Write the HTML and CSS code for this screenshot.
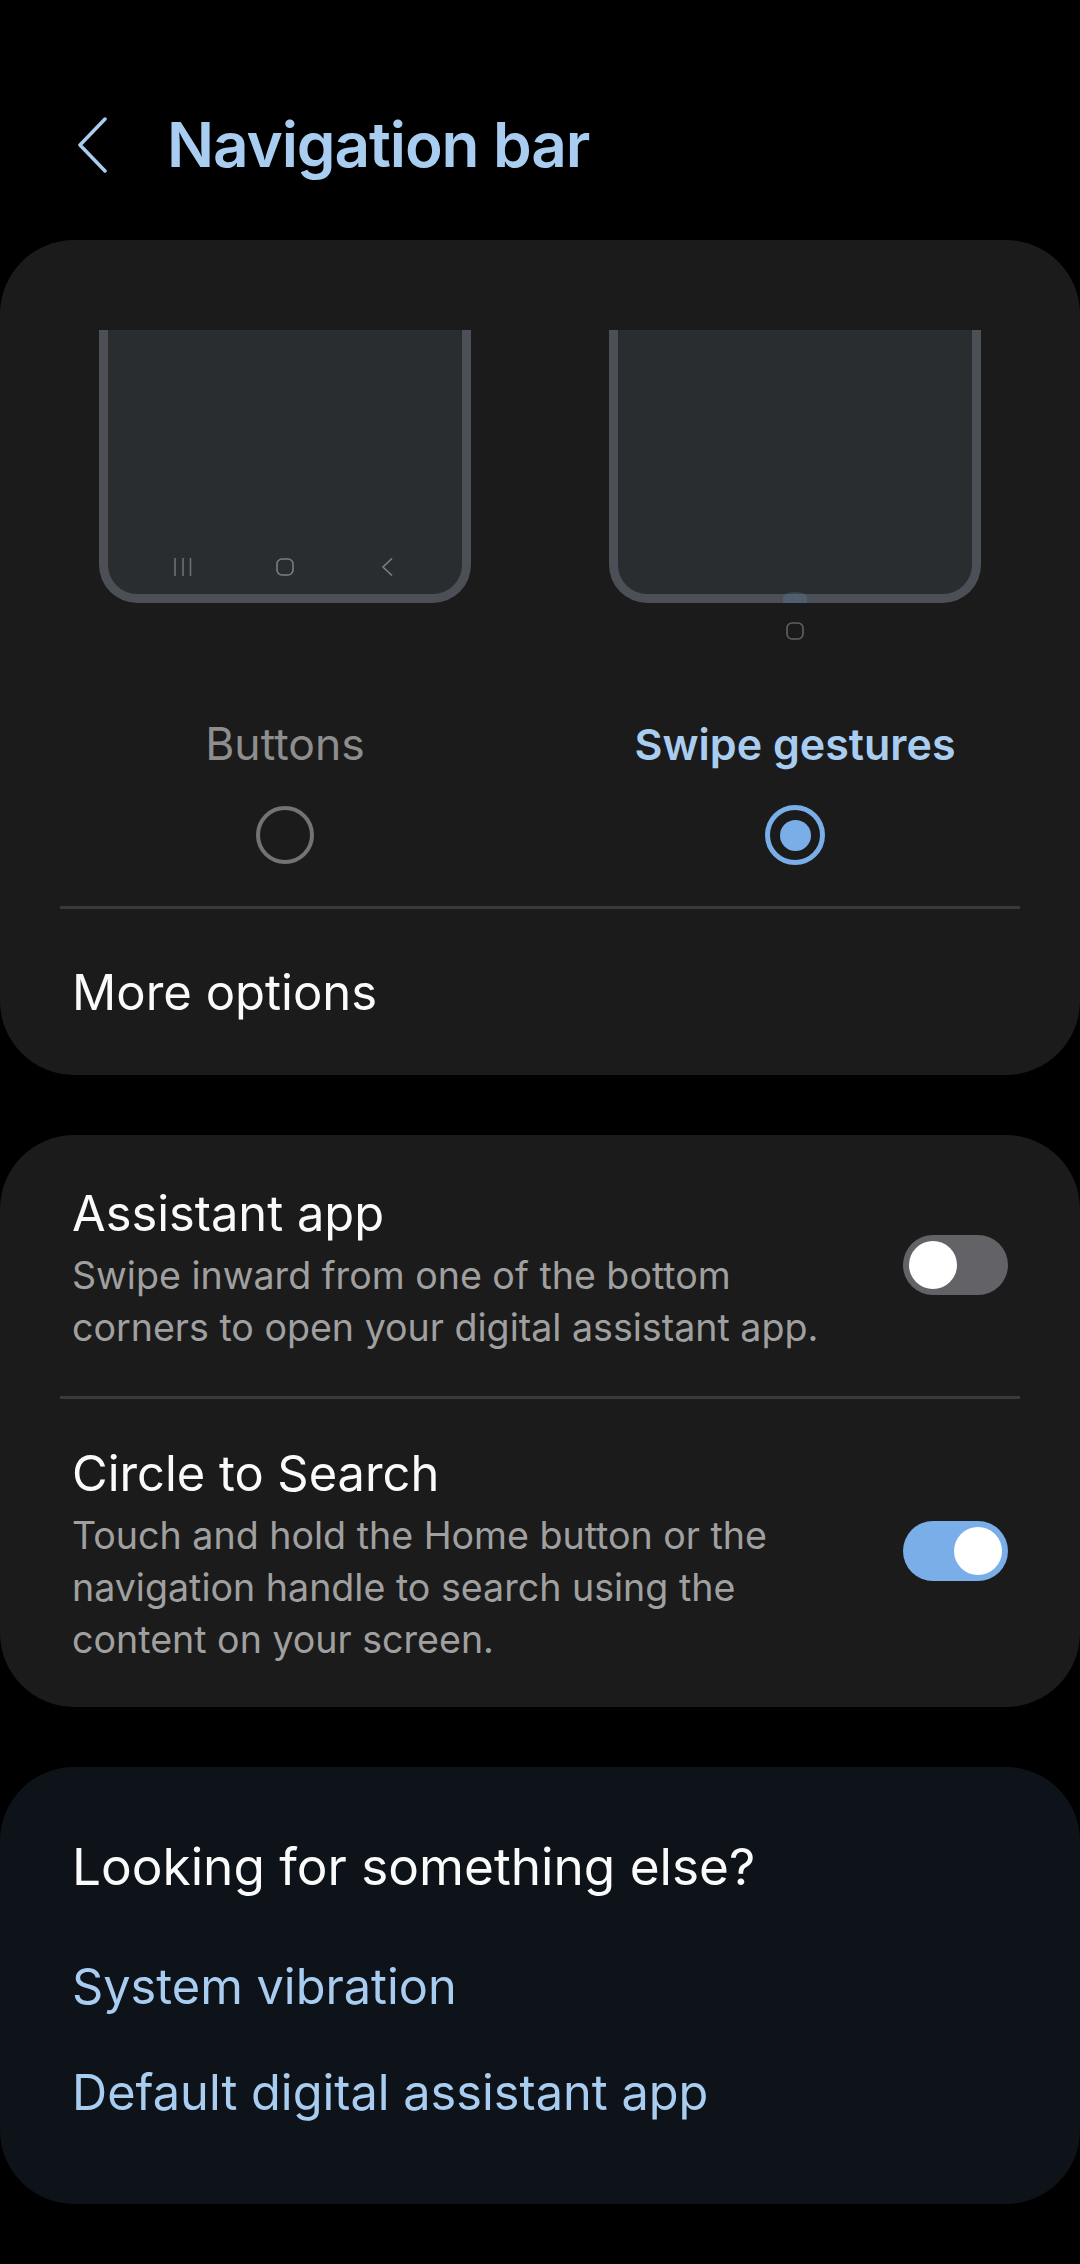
FILE: index.html
```html
<!DOCTYPE html>
<html lang="en">
<head>
  <meta charset="UTF-8">
  <meta name="viewport" content="width=device-width, initial-scale=1.0">
  <title>Navigation bar</title>
  <link rel="stylesheet" href="styles.css">
</head>
<body>
  <header class="top-bar">
    <svg class="back-icon" width="30" height="56" viewBox="0 0 30 56" fill="none" stroke="#a9cdf0" stroke-width="3.5" stroke-linecap="round" stroke-linejoin="round">
      <path d="M28 2 L3 28 L28 54"/>
    </svg>
    <h1 class="page-title">Navigation bar</h1>
  </header>

  <section class="card">
    <div class="nav-options">
      <div class="nav-option">
        <div class="preview-area">
          <div class="phone">
            <span class="phone-icon">
              <svg width="18" height="18" viewBox="0 0 18 18" fill="none" stroke="#6d7073" stroke-width="1.6"><path d="M1 0V18M9 0V18M16.5 0V18"/></svg>
            </span>
            <span class="phone-icon">
              <svg width="18" height="18" viewBox="0 0 18 18" fill="none" stroke="#7b7e81" stroke-width="1.6"><rect x="1" y="1" width="16" height="16" rx="5"/></svg>
            </span>
            <span class="phone-icon">
              <svg width="12" height="18" viewBox="0 0 12 18" fill="none" stroke="#7b7e81" stroke-width="1.6"><path d="M11 .5 L2 9 L11 17.5"/></svg>
            </span>
          </div>
        </div>
        <div class="option-label">Buttons</div>
        <span class="radio"></span>
      </div>
      <div class="nav-option">
        <div class="preview-area">
          <div class="phone">
            <span class="gesture-handle"></span>
          </div>
          <svg class="gesture-home" width="18" height="18" viewBox="0 0 18 18" fill="none" stroke="#5f6164" stroke-width="1.6"><rect x="1" y="1" width="16" height="16" rx="5"/></svg>
        </div>
        <div class="option-label selected">Swipe gestures</div>
        <span class="radio checked"></span>
      </div>
    </div>
    <hr class="divider">
    <div class="more-row">More options</div>
  </section>

  <section class="card">
    <div class="setting-row first">
      <div class="setting-text">
        <div class="setting-title">Assistant app</div>
        <div class="setting-desc">Swipe inward from one of the bottom<br>corners to open your digital assistant app.</div>
      </div>
      <span class="toggle"></span>
    </div>
    <hr class="divider">
    <div class="setting-row">
      <div class="setting-text">
        <div class="setting-title">Circle to Search</div>
        <div class="setting-desc">Touch and hold the Home button or the<br>navigation handle to search using the<br>content on your screen.</div>
      </div>
      <span class="toggle on"></span>
    </div>
  </section>

  <section class="card related">
    <div class="related-title">Looking for something else?</div>
    <a class="related-link">System vibration</a>
    <a class="related-link">Default digital assistant app</a>
  </section>
</body>
</html>
```

FILE: styles.css
```css
* {
  margin: 0;
  padding: 0;
  box-sizing: border-box;
}

body {
  font-family: Inter, "Noto Sans", sans-serif;
  background-color: #000000;
  color: #fafafa;
  width: 1080px;
  min-height: 2264px;
}

.top-bar {
  display: flex;
  align-items: center;
  height: 240px;
  padding: 50px 0 0 77px;
}

.back-icon {
  flex: none;
}

.page-title {
  margin-left: 60px;
  font-size: 62px;
  font-weight: 600;
  line-height: 70px;
  letter-spacing: -1.1px;
  color: #a9cdf0;
}

.card {
  background-color: #1b1b1b;
  border-radius: 74px;
  margin-bottom: 60px;
}

.nav-options {
  display: grid;
  grid-template-columns: 510px 510px;
  padding: 90px 30px 0;
}

.nav-option {
  display: flex;
  flex-direction: column;
  align-items: center;
}

.preview-area {
  display: flex;
  flex-direction: column;
  align-items: center;
  height: 384px;
}

.phone {
  position: relative;
  display: flex;
  justify-content: center;
  align-items: flex-end;
  flex: none;
  width: 372px;
  height: 273px;
  padding-bottom: 18px;
  background-color: #2a2d30;
  border: 9px solid #4c4f55;
  border-top: none;
  border-radius: 0 0 38px 38px;
}

.phone-icon {
  display: flex;
  justify-content: center;
  width: 102px;
  height: 18px;
}

.gesture-handle {
  position: absolute;
  left: 165px;
  bottom: -9px;
  width: 24px;
  height: 11px;
  background-color: rgba(90, 130, 165, 0.3);
  border-radius: 50% 50% 0 0;
}

.gesture-home {
  margin-top: 19px;
}

.option-label {
  font-size: 44.5px;
  line-height: 60px;
  color: #8e8e8e;
}

.option-label.selected {
  font-size: 43px;
  font-weight: 600;
  color: #a9cdf0;
}

.radio {
  display: block;
  width: 58px;
  height: 58px;
  margin-top: 32px;
  border: 4px solid #737373;
  border-radius: 50%;
}

.radio.checked {
  display: flex;
  justify-content: center;
  align-items: center;
  width: 60px;
  height: 60px;
  margin-top: 31px;
  border: 5px solid #7aaee8;
}

.radio.checked::after {
  content: "";
  width: 31px;
  height: 31px;
  background-color: #7aaee8;
  border-radius: 50%;
}

.divider {
  height: 3px;
  margin: 0 60px;
  border: none;
  background-color: #3a3a3a;
}

.nav-options + .divider {
  margin-top: 41px;
}

.more-row {
  display: flex;
  align-items: center;
  height: 166px;
  padding-left: 72px;
  font-size: 49px;
}

.setting-row {
  display: flex;
  justify-content: space-between;
  align-items: center;
  padding: 45px 72px 41px;
}

.setting-row.first {
  padding-top: 49px;
  padding-bottom: 42px;
}

.setting-title {
  font-size: 48.8px;
  line-height: 60px;
}

.setting-desc {
  margin-top: 6px;
  font-size: 37.6px;
  line-height: 52px;
  color: #a0a0a0;
}

.toggle {
  position: relative;
  flex: none;
  width: 105px;
  height: 60px;
  margin-bottom: 8px;
  background-color: #636266;
  border-radius: 30px;
}

.toggle::after {
  content: "";
  position: absolute;
  top: 6px;
  left: 6px;
  width: 48px;
  height: 48px;
  background-color: #ffffff;
  border-radius: 50%;
}

.toggle.on {
  background-color: #7aaee8;
}

.toggle.on::after {
  left: 51px;
}

.related {
  display: flex;
  flex-direction: column;
  background-color: #0e131a;
  margin-bottom: 0;
  height: 437px;
  padding: 69px 72px 0;
}

.related-title {
  font-size: 51.3px;
  line-height: 60px;
  margin-bottom: 61px;
}

.related-link {
  font-size: 48.7px;
  line-height: 60px;
  margin-bottom: 46px;
  color: #a9cdf0;
}
```
